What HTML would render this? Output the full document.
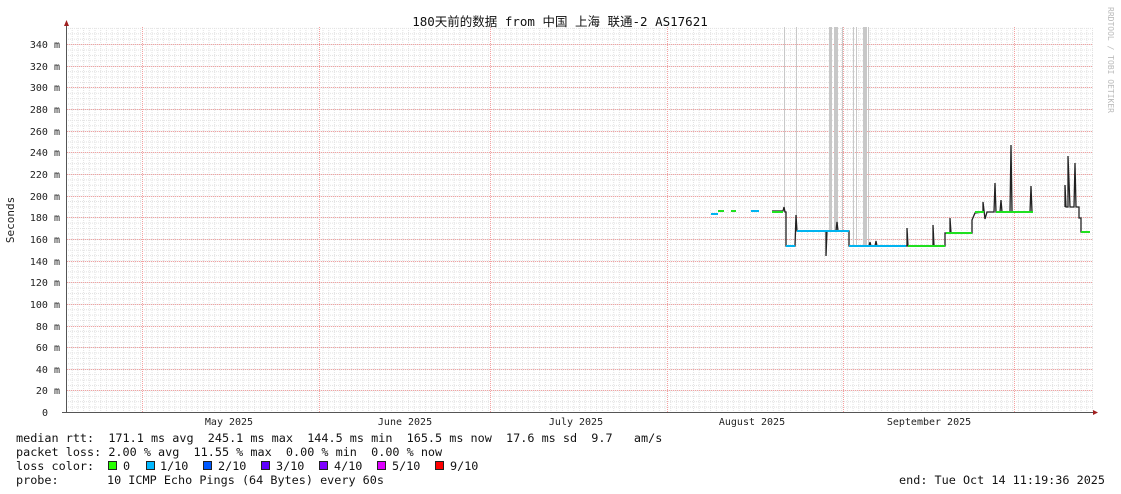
<!DOCTYPE html>
<html><head><meta charset="utf-8"><style>
html,body{margin:0;padding:0;background:#fff;}
svg{display:block;font-family:"DejaVu Sans Mono","Liberation Mono","Noto Sans CJK SC",monospace;}
svg text{white-space:pre;}
</style></head><body>
<svg width="1121" height="494" xmlns="http://www.w3.org/2000/svg">
<defs>
<pattern id="gv" x="66" y="0" width="5.7" height="4" patternUnits="userSpaceOnUse">
<rect x="0" y="0" width="1" height="1" fill="#e2e2e2"/><rect x="0" y="2" width="1" height="1" fill="#e2e2e2"/>
</pattern>
<pattern id="gh" x="0" y="412" width="4" height="5.41" patternUnits="userSpaceOnUse">
<rect x="0" y="0" width="1" height="1" fill="#e2e2e2"/><rect x="2" y="0" width="1" height="1" fill="#e2e2e2"/>
</pattern>
</defs>
<rect x="67" y="27" width="1026" height="385" fill="url(#gv)"/>
<rect x="67" y="27" width="1026" height="385" fill="url(#gh)"/>
<g stroke="#f4a0a0" stroke-width="1" stroke-dasharray="1,1" shape-rendering="crispEdges">
<line x1="67" x2="1093" y1="44.5" y2="44.5"/><line x1="67" x2="1093" y1="66.5" y2="66.5"/><line x1="67" x2="1093" y1="87.5" y2="87.5"/><line x1="67" x2="1093" y1="109.5" y2="109.5"/><line x1="67" x2="1093" y1="131.5" y2="131.5"/><line x1="67" x2="1093" y1="152.5" y2="152.5"/><line x1="67" x2="1093" y1="174.5" y2="174.5"/><line x1="67" x2="1093" y1="196.5" y2="196.5"/><line x1="67" x2="1093" y1="217.5" y2="217.5"/><line x1="67" x2="1093" y1="239.5" y2="239.5"/><line x1="67" x2="1093" y1="261.5" y2="261.5"/><line x1="67" x2="1093" y1="282.5" y2="282.5"/><line x1="67" x2="1093" y1="304.5" y2="304.5"/><line x1="67" x2="1093" y1="326.5" y2="326.5"/><line x1="67" x2="1093" y1="347.5" y2="347.5"/><line x1="67" x2="1093" y1="369.5" y2="369.5"/><line x1="67" x2="1093" y1="390.5" y2="390.5"/>
<line x1="142.5" x2="142.5" y1="27" y2="412"/><line x1="319.5" x2="319.5" y1="27" y2="412"/><line x1="490.5" x2="490.5" y1="27" y2="412"/><line x1="667.5" x2="667.5" y1="27" y2="412"/><line x1="843.5" x2="843.5" y1="27" y2="412"/><line x1="1014.5" x2="1014.5" y1="27" y2="412"/>
</g>
<g fill="#c8c8c8">
<rect x="784" y="27" width="1" height="185"/><rect x="796" y="27" width="1" height="190"/>
<rect x="829" y="27" width="3" height="205"/><rect x="834" y="27" width="4" height="205"/><rect x="842" y="27" width="1" height="205"/>
<rect x="853" y="27" width="1" height="220"/><rect x="856" y="27" width="1" height="220"/><rect x="863" y="27" width="4" height="220"/><rect x="868" y="27" width="1" height="220"/>
</g>
<polyline fill="none" stroke="#222" stroke-width="1.3" points="772,211 783,211 784,207 785,212 786,212 786,246 795,246 796,215 797,231 826,231 826,256 827,231 836,231 837,222 838,231 849,231 849,246 869,246 870,242 871,246 875,246 876,241 877,246 907,246 907,228 908,246 933,246 933,225 934,246 945,246 945,233 950,233 950,218 951,233 972,233 972,220 975,213 983,212 983,202 985,219 987,212 994,212 995,183 996,212 1000,212 1001,200 1002,212 1010,212 1011,145 1012,212 1030,212 1031,186 1032,212 1033,212"/>
<polyline fill="none" stroke="#222" stroke-width="1.3" points="1065,207 1065,185 1066,207 1068,207 1068,156 1070,207 1074,207 1075,163 1076,207 1079,207 1079,218 1081,218 1081,232 1090,232"/>
<g stroke-width="2" fill="none">
<polyline stroke="#00b4f0" points="711,214 718,214"/>
<polyline stroke="#20e020" points="718,211 724,211"/>
<polyline stroke="#20e020" points="731,211 736,211"/>
<polyline stroke="#00b4f0" points="751,211 759,211"/>
<polyline stroke="#20e020" points="772,212 783,212"/>
<polyline stroke="#00b4f0" points="786,246 795,246"/>
<polyline stroke="#00b4f0" points="797,231 849,231"/>
<polyline stroke="#00b4f0" points="849,246 906,246"/>
<polyline stroke="#20e020" points="908,246 945,246"/>
<polyline stroke="#20e020" points="946,233 972,233"/>
<polyline stroke="#20e020" points="975,212 984,212"/>
<polyline stroke="#20e020" points="996,212 1033,212"/>
<polyline stroke="#20e020" points="1081,232 1090,232"/>
</g>
<line x1="66.5" x2="66.5" y1="24" y2="413" stroke="#555"/>
<polygon points="64,26 69,26 66.5,20" fill="#a02020"/>
<line x1="62" x2="1094" y1="412.5" y2="412.5" stroke="#555"/>
<polygon points="1093,410 1093,415 1098,412.5" fill="#a02020"/>
<g font-size="10" fill="#222" text-anchor="end">
<text x="60" y="48">340 m</text><text x="60" y="70">320 m</text><text x="60" y="91">300 m</text><text x="60" y="113">280 m</text><text x="60" y="135">260 m</text><text x="60" y="156">240 m</text><text x="60" y="178">220 m</text><text x="60" y="200">200 m</text><text x="60" y="221">180 m</text><text x="60" y="243">160 m</text><text x="60" y="265">140 m</text><text x="60" y="286">120 m</text><text x="60" y="308">100 m</text><text x="60" y="330">80 m</text><text x="60" y="351">60 m</text><text x="60" y="373">40 m</text><text x="60" y="394">20 m</text><text x="48" y="416">0</text>
</g>
<g font-size="10" fill="#222" text-anchor="middle">
<text x="229" y="425">May 2025</text><text x="405" y="425">June 2025</text><text x="576" y="425">July 2025</text><text x="752" y="425">August 2025</text><text x="929" y="425">September 2025</text>
</g>
<text x="14" y="220" font-size="11" fill="#222" text-anchor="middle" transform="rotate(-90 14 220)">Seconds</text>
<text x="560" y="26" font-size="12.5" fill="#111" text-anchor="middle">180天前的数据 from 中国 上海 联通-2 AS17621</text>
<text x="1108" y="60" font-size="8" fill="#bbb" text-anchor="middle" transform="rotate(90 1108 60)">RRDTOOL / TOBI OETIKER</text>
<g font-size="11.8" fill="#111">
<text x="16" y="442">median rtt:  171.1 ms avg  245.1 ms max  144.5 ms min  165.5 ms now  17.6 ms sd  9.7   am/s</text>
<text x="16" y="456">packet loss: 2.00 % avg  11.55 % max  0.00 % min  0.00 % now</text>
<text x="16" y="470">loss color:</text>
<text x="123" y="470">0</text>
<text x="160" y="470">1/10</text>
<text x="218" y="470">2/10</text>
<text x="276" y="470">3/10</text>
<text x="334" y="470">4/10</text>
<text x="392" y="470">5/10</text>
<text x="450" y="470">9/10</text>
<text x="16" y="484">probe:</text>
<text x="107" y="484">10 ICMP Echo Pings (64 Bytes) every 60s</text>
<text x="1105" y="484" text-anchor="end">end: Tue Oct 14 11:19:36 2025</text>
</g>
<g stroke="#222" stroke-width="1">
<rect x="108.5" y="461.5" width="8" height="8" fill="#26ff00"/>
<rect x="146.5" y="461.5" width="8" height="8" fill="#00b8ff"/>
<rect x="203.5" y="461.5" width="8" height="8" fill="#0059ff"/>
<rect x="261.5" y="461.5" width="8" height="8" fill="#5e00ff"/>
<rect x="319.5" y="461.5" width="8" height="8" fill="#7e00ff"/>
<rect x="377.5" y="461.5" width="8" height="8" fill="#dd00ff"/>
<rect x="435.5" y="461.5" width="8" height="8" fill="#ff0000"/>
</g>
</svg>
</body></html>
